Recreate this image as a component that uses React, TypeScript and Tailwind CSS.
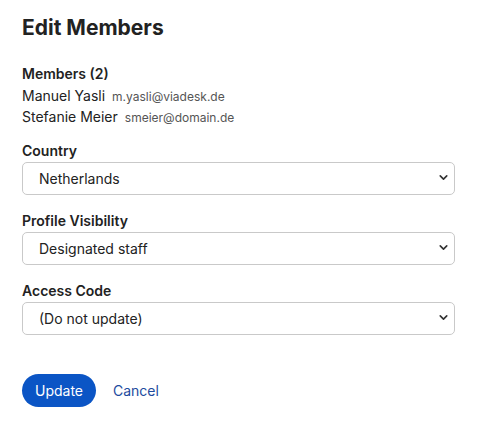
import { ChevronDown } from "lucide-react";

const members = [
  { name: "Manuel Yasli", email: "m.yasli@viadesk.de" },
  { name: "Stefanie Meier", email: "smeier@domain.de" },
];

const fields = [
  { label: "Country", value: "Netherlands" },
  { label: "Profile Visibility", value: "Designated staff" },
  { label: "Access Code", value: "(Do not update)" },
];

function SelectField({ label, value }: { label: string; value: string }) {
  return (
    <div className="flex flex-col">
      <label className="text-[14px] leading-5 font-semibold text-[#222]">{label}</label>
      <div className="relative mt-[1px] h-[33px] w-[433px]">
        <select
          defaultValue={value}
          className="h-full w-full appearance-none rounded-[5px] border border-[#c9c9c9] bg-white pl-[16px] text-[14px] text-[#222] outline-none"
        >
          <option>{value}</option>
        </select>
        <ChevronDown
          size={13}
          strokeWidth={3}
          className="pointer-events-none absolute top-[9px] right-[5px] text-[#333]"
        />
      </div>
    </div>
  );
}

export default function App() {
  return (
    <div className="min-h-[424px] w-[478px] bg-white px-[22px] pt-[14px] font-['Inter',sans-serif] text-[#222]">
      <h1 className="text-[21px] leading-7 font-bold text-[#222]">Edit Members</h1>

      <section className="mt-[22px]">
        <div className="mb-[2px] text-[14px] leading-5 font-semibold">Members ({members.length})</div>
        {members.map((m) => (
          <div key={m.email} className="flex items-baseline gap-[7px] text-[14px] leading-5">
            <span>{m.name}</span>
            <span className="text-[12px] text-[#555]">{m.email}</span>
          </div>
        ))}
      </section>

      <div className="mt-[13px] flex flex-col gap-[16px]">
        {fields.map((f) => (
          <SelectField key={f.label} label={f.label} value={f.value} />
        ))}
      </div>

      <div className="mt-[39px] flex items-center gap-[17px]">
        <button
          type="button"
          className="h-[33px] w-[74px] rounded-full bg-[#0b55c5] text-[14px] text-white"
        >
          Update
        </button>
        <button type="button" className="text-[14px] text-[#1d4b9e]">
          Cancel
        </button>
      </div>
    </div>
  );
}
